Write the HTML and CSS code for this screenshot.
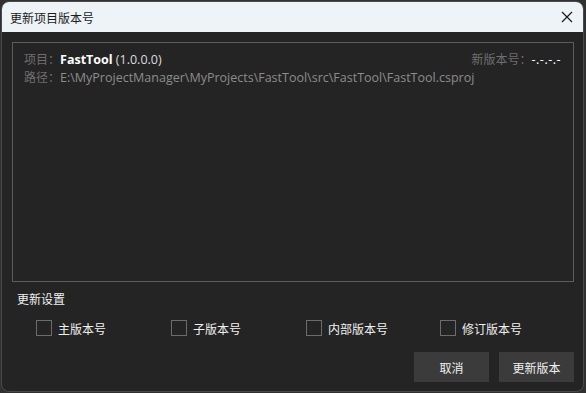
FILE: index.html
```html
<!DOCTYPE html>
<html lang="zh-CN">
<head>
    <meta charset="UTF-8">
    <meta name="viewport" content="width=device-width, initial-scale=1.0">
    <title>更新项目版本号</title>
    <link rel="stylesheet" href="styles.css">
</head>
<body>
    <div class="window">
        <div class="titlebar">
            <span class="title">更新项目版本号</span>
            <svg class="close" width="12" height="12" viewBox="0 0 12 12">
                <path d="M1 1 L11 11 M11 1 L1 11" stroke="#1a1a1a" stroke-width="1.2" fill="none"/>
            </svg>
        </div>
        <div class="content">
            <div class="panel">
                <div class="row">
                    <div class="line">
                        <span class="label">项目：</span><span class="name">FastTool</span> <span class="version">(1.0.0.0)</span>
                    </div>
                    <div class="line">
                        <span class="label">新版本号：</span><span class="newver">-.-.-.-</span>
                    </div>
                </div>
                <div class="line">
                    <span class="label">路径：</span><span class="path">E:\MyProjectManager\MyProjects\FastTool\src\FastTool\FastTool.csproj</span>
                </div>
            </div>
            <div class="settings-title">更新设置</div>
            <div class="checks">
                <label class="check"><span class="box"></span>主版本号</label>
                <label class="check"><span class="box"></span>子版本号</label>
                <label class="check"><span class="box"></span>内部版本号</label>
                <label class="check"><span class="box"></span>修订版本号</label>
            </div>
            <div class="actions">
                <button class="button">取消</button>
                <button class="button">更新版本</button>
            </div>
        </div>
    </div>
</body>
</html>
```

FILE: styles.css
```css
body {
    margin: 0;
    background-color: #303030;
    font-family: "Open Sans", "Noto Sans CJK SC", sans-serif;
    font-size: 12.5px;
}

.window {
    margin: 1px 0 0 1px;
    width: 581px;
    height: 389px;
    border: 1px solid #4a4a4a;
    border-radius: 8px;
    overflow: hidden;
    background-color: #242424;
    display: flex;
    flex-direction: column;
}

.titlebar {
    height: 30px;
    flex: none;
    background-color: #eef3f8;
    display: flex;
    align-items: center;
    justify-content: space-between;
    padding: 0 10px 0 8px;
}

.title {
    color: #1a1a1a;
    font-family: "Noto Sans CJK SC", sans-serif;
    font-size: 12px;
}

.close {
    display: block;
}

.content {
    flex: 1;
    padding: 10px 9px 9px 10px;
    display: flex;
    flex-direction: column;
}

.panel {
    height: 231px;
    border: 1px solid #5c5c5c;
    padding: 7px 12px 0 11px;
}

.row {
    display: flex;
    justify-content: space-between;
}

.line {
    height: 18px;
    line-height: 18px;
    white-space: nowrap;
}

.label {
    color: #6f6f6f;
    font-family: "Noto Sans CJK SC", sans-serif;
    font-size: 12px;
}

.name {
    color: #ffffff;
    font-weight: bold;
}

.version {
    color: #dcdcdc;
}

.path {
    color: #8c8c8c;
}

.newver {
    color: #ffffff;
    letter-spacing: 0.5px;
}

.settings-title {
    margin: 8px 0 0 5px;
    color: #f0f0f0;
    font-family: "Noto Sans CJK SC", sans-serif;
    font-size: 12px;
    height: 18px;
    line-height: 18px;
}

.checks {
    display: grid;
    grid-template-columns: 135px 135px 134px 134px;
    margin: 11px 0 0 24px;
}

.check {
    display: flex;
    align-items: center;
    color: #f0f0f0;
    font-family: "Noto Sans CJK SC", sans-serif;
    font-size: 12px;
    height: 18px;
}

.box {
    width: 14px;
    height: 14px;
    border: 1px solid #6c6c6c;
    margin-right: 6px;
}

.actions {
    display: flex;
    justify-content: flex-end;
    gap: 10px;
    margin-top: 15px;
}

.button {
    width: 75px;
    height: 30px;
    border: none;
    background-color: #3b3b3b;
    color: #f0f0f0;
    font-family: "Noto Sans CJK SC", sans-serif;
    font-size: 12px;
    cursor: pointer;
}

.button:hover {
    background-color: #484848;
}
```
